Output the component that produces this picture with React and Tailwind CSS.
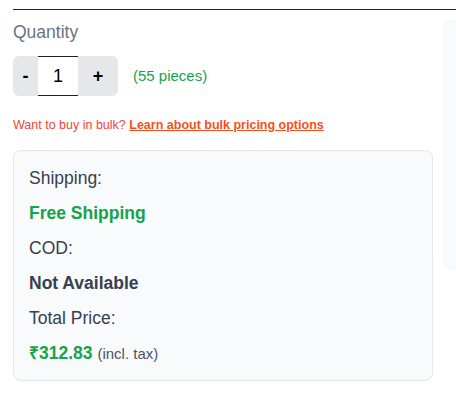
import React, { useState } from 'react';

export default function App() {
  const [qty, setQty] = useState(1);

  return (
    <div className="w-[456px] h-[401px] overflow-hidden bg-white pl-[13px] font-['Liberation_Sans',Arial,sans-serif]">
      <div className="mt-[9px] border-t border-[#222]" />
      <div className="flex gap-[10px]">
        {/* left column */}
        <div className="w-[420px] shrink-0">
          <p className="mt-[8px] text-[17.5px] leading-[28px] text-[#6b7280]">Quantity</p>

          <div className="mt-[10px] flex items-center">
            <div className="flex h-[40px]">
              <button
                onClick={() => setQty(Math.max(1, qty - 1))}
                className="w-[25px] rounded-l-md bg-[#e5e7eb] text-[18px] font-bold text-black"
              >
                -
              </button>
              <input
                value={qty}
                readOnly
                className="w-[40px] border-y border-[#222] bg-white text-center text-[18px] text-black outline-none"
              />
              <button
                onClick={() => setQty(qty + 1)}
                className="w-[40px] rounded-r-md bg-[#e5e7eb] text-[18px] font-bold text-black"
              >
                +
              </button>
            </div>
            <span className="ml-[15px] text-[15px] text-[#16a34a]">(55 pieces)</span>
          </div>

          <p className="mt-[21px] text-[12.5px] leading-[16px] text-[#f44336]">
            Want to buy in bulk?{' '}
            <a href="#" className="font-bold text-[#f4511e] underline">
              Learn about bulk pricing options
            </a>
          </p>

          <div className="mt-[17px] flex flex-col gap-[8px] rounded-lg border border-[#e5e7eb] bg-[#f9fafb] px-[15px] pt-[14px] pb-[13px] text-[17.5px] leading-[27px] text-[#374151]">
            <p>Shipping:</p>
            <p className="font-bold text-[#16a34a]">Free Shipping</p>
            <p>COD:</p>
            <p className="font-bold">Not Available</p>
            <p>Total Price:</p>
            <p>
              <span className="font-bold text-[#16a34a]">₹312.83</span>{' '}
              <span className="text-[15px] text-[#4b5563]">(incl. tax)</span>
            </p>
          </div>
        </div>

        {/* right side panel */}
        <div className="mt-[10px] h-[250px] w-[40px] shrink-0 rounded-l-lg bg-[#f9fafb]" />
      </div>
    </div>
  );
}
